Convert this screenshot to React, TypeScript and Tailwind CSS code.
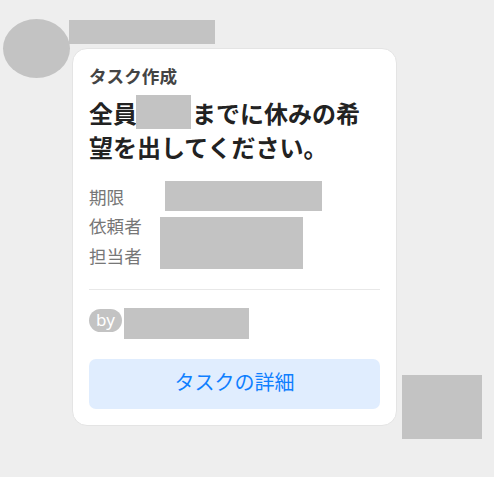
function Redacted({ className }: { className: string }) {
  return <div className={`shrink-0 bg-[#c3c3c3] ${className}`} />;
}

const labels = ["期限", "依頼者", "担当者"];

export default function App() {
  return (
    <main className="flex h-[477px] w-[494px] items-start overflow-hidden bg-[#eeeeee] pl-[3px] font-['Noto_Sans','Noto_Sans_CJK_JP',sans-serif]">
      <Redacted className="mt-[19px] h-[59px] w-[67px] rounded-[50%]" />

      <section className="-ml-px mt-5 shrink-0">
        <Redacted className="h-6 w-[146px]" />

        <article className="ml-[3px] mt-1 flex h-[378px] w-[325px] flex-col rounded-[15px] border border-[#e4e4e4] bg-white px-4 pb-4 pt-[15px]">
          <p className="h-6 text-[17.6px] font-bold leading-6 text-[#444444]">タスク作成</p>

          <h1 className="mt-[9px] whitespace-nowrap text-[24px] font-bold leading-[34px] text-[#222222]">
            <span className="flex h-[34px]">
              全員
              <Redacted className="-ml-px -mt-[2px] mr-px h-[34px] w-[55px]" />
              までに休みの希
            </span>
            <span className="block h-[34px]">望を出してください。</span>
          </h1>

          <div className="mt-4 flex h-[91px] text-[17.6px] text-[#777777]">
            <div className="w-[71px] pt-[1.8px]">
              {labels.map((label) => (
                <p key={label} className="h-[29.5px] leading-[29.5px]">
                  {label}
                </p>
              ))}
            </div>
            <div>
              <Redacted className="ml-[5px] h-[30px] w-[157px]" />
              <Redacted className="mt-[6px] h-[52px] w-[143px]" />
            </div>
          </div>

          <hr className="mt-[17px] border-[#e8e8e8]" />

          <div className="mt-[18px] flex items-start gap-[2px]">
            <span className="mt-px h-[23px] w-[33px] rounded-full bg-[#c3c3c3] text-center text-[17px] leading-[22px] text-white">
              by
            </span>
            <Redacted className="h-[31px] w-[125px]" />
          </div>

          <button
            type="button"
            className="mt-5 h-[50px] w-full rounded-[7px] bg-[#e0edfe] pb-[2px] text-[20px] leading-6 text-[#0f7fff]"
          >
            タスクの詳細
          </button>
        </article>
      </section>

      <Redacted className="ml-[5px] mt-[375px] h-16 w-20" />
    </main>
  );
}
